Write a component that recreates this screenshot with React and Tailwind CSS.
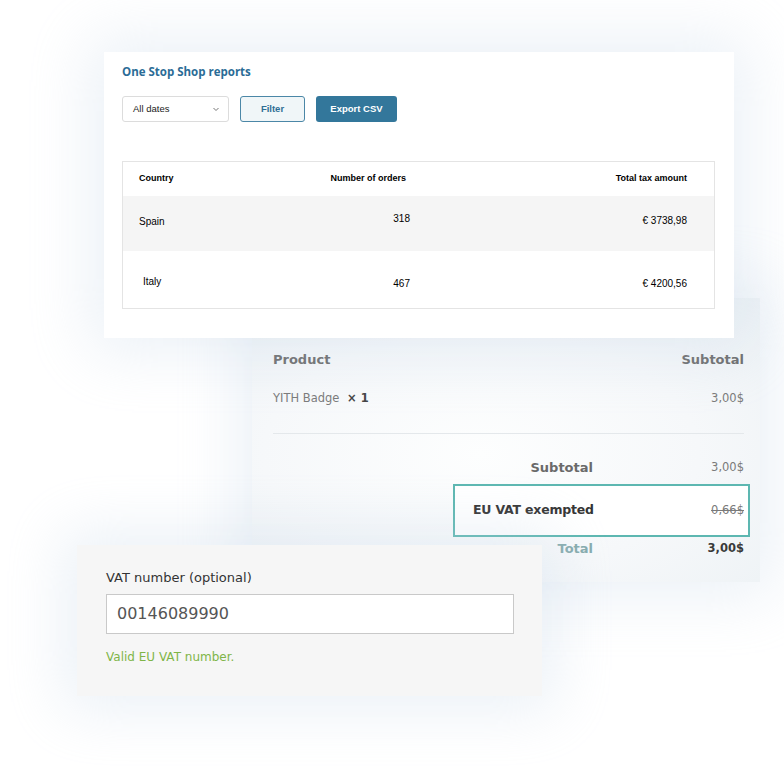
export default function App() {
    return (
        <div className="relative w-[784px] h-[776px] bg-white overflow-hidden">
            {/* Checkout totals card (behind) */}
            <div
                className="absolute left-[252px] top-[298px] w-[508px] h-[284px] bg-[radial-gradient(ellipse_at_45%_55%,#fdfefe_0%,#f6f8fa_55%,#edf2f5_100%)] shadow-[0_0_60px_14px_rgba(195,214,230,0.33)] pl-[21px] pr-[16px] pt-[52px] flex flex-col"
                style={{ fontFamily: '"DejaVu Sans", sans-serif' }}
            >
                <div className="flex justify-between items-center h-5 text-[13px] font-bold text-[#6a6a6a]">
                    <span>Product</span>
                    <span>Subtotal</span>
                </div>
                <div className="flex justify-between items-center h-5 mt-[19px] text-[11.5px] text-[#7a7a7a]">
                    <span>
                        YITH Badge <span className="font-bold text-[#444] ml-1">× 1</span>
                    </span>
                    <span>3,00$</span>
                </div>
                <div className="h-px bg-[#e4e8eb] mt-[24px]" />
                <div className="ml-[180px] -mr-[6px] mt-[24px] flex flex-col">
                    <div className="grid grid-cols-[140px_1fr] items-center h-5">
                        <span className="text-right text-[13px] font-bold text-[#6a6a6a]">Subtotal</span>
                        <span className="text-right pr-[6px] text-[11.5px] text-[#7a7a7a]">3,00$</span>
                    </div>
                    <div className="mt-[6px] h-[53px] border-2 border-[#5db7b1] bg-white flex items-center justify-between pl-[18px] pr-[4px]">
                        <span className="text-[12.5px] font-bold text-[#333] tracking-[-0.2px]">EU VAT exempted</span>
                        <span className="text-[11.5px] text-[#7a7a7a] line-through">0,66$</span>
                    </div>
                    <div className="grid grid-cols-[140px_1fr] items-center h-5 mt-[2px]">
                        <span className="text-right text-[13px] font-bold text-[#86abad]">Total</span>
                        <span className="text-right pr-[6px] text-[11.5px] font-bold text-[#3a3a3a]">3,00$</span>
                    </div>
                </div>
            </div>

            {/* One Stop Shop reports card */}
            <div className="absolute left-[104px] top-[52px] w-[630px] h-[286px] bg-white shadow-[0_0_60px_14px_rgba(195,214,230,0.33)] pl-[18px] pt-[11px]">
                <div
                    className="leading-[18px] text-[11.5px] font-bold text-[#2b6c96]"
                    style={{ fontFamily: '"Open Sans", sans-serif' }}
                >
                    One Stop Shop reports
                </div>
                <div
                    className="flex gap-[11px] mt-[15px] h-[26px] text-[9.5px]"
                    style={{ fontFamily: '"Liberation Sans", Arial, sans-serif' }}
                >
                    <div className="w-[107px] border border-[#dcdcdc] rounded-[3px] flex items-center justify-between pl-[10px] pr-[8px] text-[#222]">
                        <span>All dates</span>
                        <svg width="8" height="8" viewBox="0 0 8 8" fill="none" stroke="#666" strokeWidth="0.9">
                            <path d="M1.5 3 L4 5.5 L6.5 3" />
                        </svg>
                    </div>
                    <div className="w-[65px] border border-[#4b87a7] rounded-[3px] bg-[#f0f6f8] flex items-center justify-center font-bold text-[#2f6f95]">
                        Filter
                    </div>
                    <div className="w-[81px] rounded-[3px] bg-[#33779b] flex items-center justify-center font-bold text-white">
                        Export CSV
                    </div>
                </div>
                <div
                    className="mt-[39px] w-[593px] border border-[#e4e4e4] text-black"
                    style={{ fontFamily: '"Liberation Sans", Arial, sans-serif' }}
                >
                    <div className="flex items-center h-[34px] text-[9px] font-bold">
                        <div className="w-[206px] pl-[16px]">Country</div>
                        <div className="w-[77px] text-right">Number of orders</div>
                        <div className="flex-1 text-right pr-[27px]">Total tax amount</div>
                    </div>
                    <div className="flex items-start h-[55px] bg-[#f5f5f5] text-[10px] leading-[12px]">
                        <div className="w-[206px] pl-[16px] pt-[20px]">Spain</div>
                        <div className="w-[81px] text-right pt-[17px]">318</div>
                        <div className="flex-1 text-right pr-[27px] pt-[19px]">€ 3738,98</div>
                    </div>
                    <div className="flex items-start h-[57px] text-[10px] leading-[12px]">
                        <div className="w-[206px] pl-[20px] pt-[25px]">Italy</div>
                        <div className="w-[81px] text-right pt-[27px]">467</div>
                        <div className="flex-1 text-right pr-[27px] pt-[27px]">€ 4200,56</div>
                    </div>
                </div>
            </div>

            {/* VAT number card */}
            <div
                className="absolute left-[77px] top-[545px] w-[465px] h-[151px] bg-[#f6f6f6] shadow-[0_0_60px_14px_rgba(195,214,230,0.33)] pl-[29px] pt-[24px]"
                style={{ fontFamily: '"DejaVu Sans", sans-serif' }}
            >
                <div className="leading-[18px] text-[13px] text-[#333]">VAT number (optional)</div>
                <div className="mt-[7px] w-[408px] h-[40px] bg-white border border-[#c9c9c9] flex items-center pl-[10px] text-[16px] text-[#555]">
                    00146089990
                </div>
                <div className="mt-[15px] leading-[16px] text-[12px] text-[#7fb548]">Valid EU VAT number.</div>
            </div>
        </div>
    );
}
